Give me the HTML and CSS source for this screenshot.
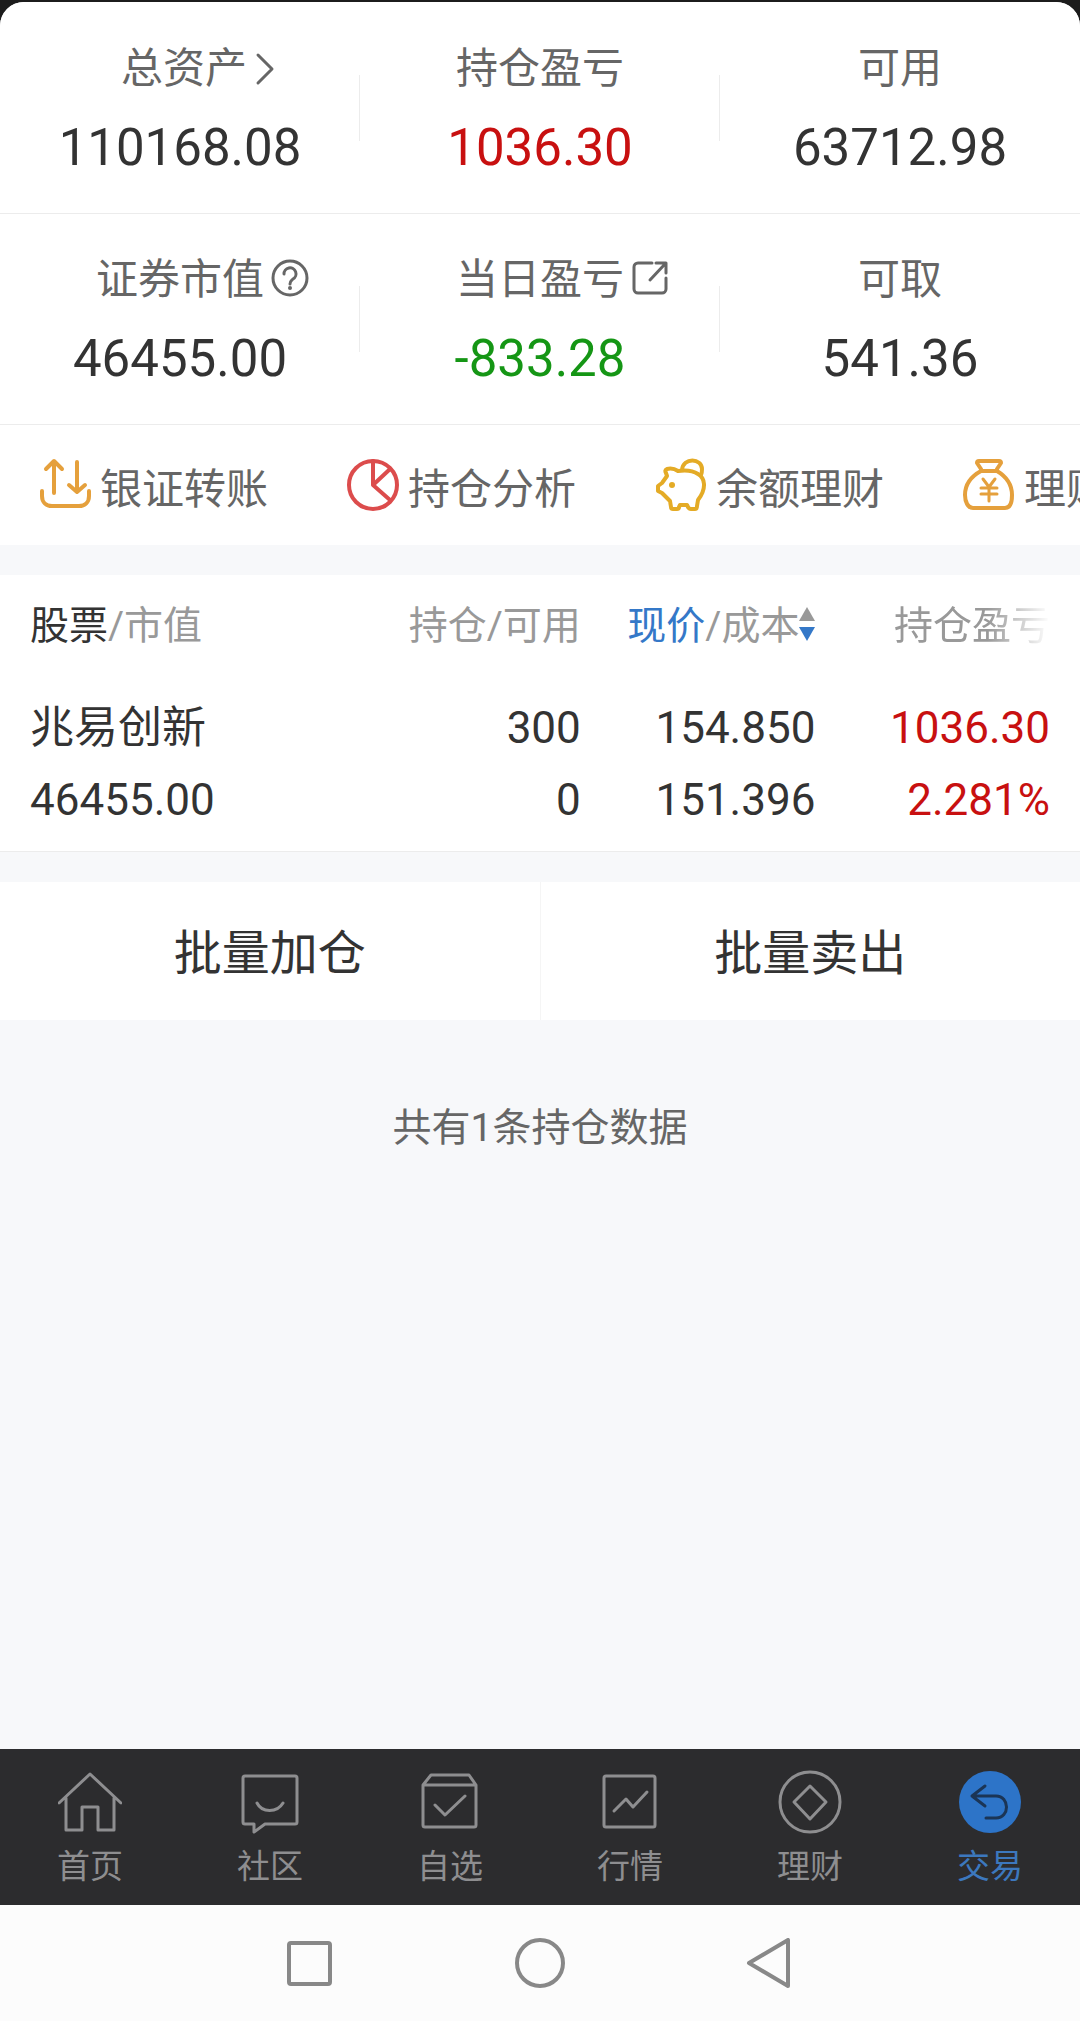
FILE: index.html
```html
<!DOCTYPE html>
<html lang="zh-CN">
<head>
  <meta charset="UTF-8">
  <meta name="viewport" content="width=device-width, initial-scale=1.0">
  <title>交易 - 持仓</title>
  <link rel="stylesheet" href="styles.css">
</head>
<body>
  <main class="page">
    <section class="summary">
      <div class="summary-row">
        <a href="#" class="cell">
          <span class="label">总资产
            <svg class="label-icon chevron" viewBox="0 0 30 38"><path d="M3 5l14 14L3 33"/></svg>
          </span>
          <span class="value">110168.08</span>
        </a>
        <div class="cell">
          <span class="label">持仓盈亏</span>
          <span class="value red">1036.30</span>
        </div>
        <div class="cell">
          <span class="label">可用</span>
          <span class="value">63712.98</span>
        </div>
      </div>
      <div class="summary-row">
        <div class="cell">
          <span class="label">证券市值
            <svg class="label-icon" viewBox="0 0 38 38">
              <circle cx="18" cy="17" r="17"/>
              <path d="M12 13a6 6 0 1 1 9 5c-2 2-3 2-3 5"/>
              <circle class="dot" cx="18" cy="27" r="2"/>
            </svg>
          </span>
          <span class="value">46455.00</span>
        </div>
        <a href="#" class="cell">
          <span class="label">当日盈亏
            <svg class="label-icon" viewBox="0 0 38 38"><path d="M20 2H6a4 4 0 0 0-4 4v22a4 4 0 0 0 4 4h24a4 4 0 0 0 4-4V17M24 2h10v10M33 3L18 19"/></svg>
          </span>
          <span class="value green">-833.28</span>
        </a>
        <div class="cell">
          <span class="label">可取</span>
          <span class="value">541.36</span>
        </div>
      </div>
    </section>

    <nav class="quick">
      <a href="#" class="quick-item">
        <svg class="quick-icon orange" viewBox="0 0 54 54"><path d="M16 35V4M8 11l8-8 8 8M39 4v30M31 27l8 7 8-7M4 33v5c0 6 4 10 10 10h27c6 0 10-4 10-10v-5"/></svg>
        <span>银证转账</span>
      </a>
      <a href="#" class="quick-item">
        <svg class="quick-icon coral" viewBox="0 0 54 54"><circle cx="27" cy="27" r="24"/><path d="M27 3v24l16-15M27 27l17 15"/></svg>
        <span>持仓分析</span>
      </a>
      <a href="#" class="quick-item">
        <svg class="quick-icon gold" viewBox="0 0 54 54">
          <path d="M24 13c-3-2-7-3-11-2-2 1-2 2-1 4l1 3-5 7-4 3v5l4 2 8 8 1 6q0 2 2 2h4q2 0 2-2l1-2h7l1 2q1 2 3 2h4q2 0 2-3l1-6c9-12 7-22 0-26-6-4-13-4-20-3z"/>
          <path d="M28 12c1-13 20-12 20-1 0 2 0 4-1 6"/>
          <circle class="dot" cx="18" cy="27" r="3"/>
        </svg>
        <span>余额理财</span>
      </a>
      <a href="#" class="quick-item">
        <svg class="quick-icon orange" viewBox="0 0 54 54">
          <path d="M17 3h20q2 0 2 2l-4 6v2H19v-2l-4-6q0-2 2-2zM19 13C8 19 3 28 3 37c0 7 3 13 8 13h32c5 0 7-6 7-13 0-9-5-18-15-24"/>
          <path class="thin" d="M21 21l6 8 6-8M27 29v14M19 30h16M19 36h16"/>
        </svg>
        <span>理财</span>
      </a>
    </nav>

    <section class="holdings">
      <table class="holdings-table">
        <thead>
          <tr>
            <th><span class="dark">股票</span>/市值</th>
            <th>持仓/可用</th>
            <th>
              <button class="sort"><span class="blue">现价</span>/成本<svg class="sort-icon" viewBox="0 0 16 38"><path class="up" d="M8 4l8 14H0z"/><path class="down" d="M0 24h16L8 38z"/></svg></button>
            </th>
            <th><span class="fade">持仓盈亏</span></th>
          </tr>
        </thead>
        <tbody>
          <tr>
            <td>兆易创新<br>46455.00</td>
            <td>300<br>0</td>
            <td>154.850<br>151.396</td>
            <td class="red">1036.30<br>2.281%</td>
          </tr>
        </tbody>
      </table>
    </section>

    <div class="batch">
      <button class="batch-btn">批量加仓</button>
      <button class="batch-btn">批量卖出</button>
    </div>

    <p class="count">共有1条持仓数据</p>
  </main>

  <nav class="tabbar">
    <a href="#" class="tab">
      <svg class="tab-icon" viewBox="0 0 64 64"><path d="M1 33L32 4l31 29M8 28v32h16V37h16v23h16V28"/></svg>
      <span>首页</span>
    </a>
    <a href="#" class="tab">
      <svg class="tab-icon" viewBox="0 0 64 64"><path d="M7 6h50q2 0 2 2v44q0 2-2 2H27l-11 8v-8H7q-2 0-2-2V8q0-2 2-2zM19 33c5 10 20 10 26 0"/></svg>
      <span>社区</span>
    </a>
    <a href="#" class="tab">
      <svg class="tab-icon" viewBox="0 0 64 64"><path d="M5 15l8-10h38l7 10v40q0 2-2 2H7q-2 0-2-2zM5 15h53M17 35l10 10 20-19"/></svg>
      <span>自选</span>
    </a>
    <a href="#" class="tab">
      <svg class="tab-icon" viewBox="0 0 64 64"><rect x="6" y="6" width="51" height="51" rx="2"/><path d="M16 41l12-12 7 8 14-15"/></svg>
      <span>行情</span>
    </a>
    <a href="#" class="tab">
      <svg class="tab-icon" viewBox="0 0 64 64"><circle cx="32" cy="32" r="30"/><path d="M32 16l16 16-16 17-16-17z"/></svg>
      <span>理财</span>
    </a>
    <a href="#" class="tab active">
      <svg class="tab-icon" viewBox="0 0 64 64"><circle class="disc" cx="32" cy="32" r="31"/><path d="M27 16L14 26l13 10M14 26h24c14 0 14 22 0 22H28"/></svg>
      <span>交易</span>
    </a>
  </nav>

  <div class="sysbar">
    <button class="sys-btn" aria-label="最近任务"><svg viewBox="0 0 50 50"><rect x="4" y="5" width="41" height="41" rx="2"/></svg></button>
    <button class="sys-btn" aria-label="主屏幕"><svg viewBox="0 0 50 50"><circle cx="25" cy="25" r="23"/></svg></button>
    <button class="sys-btn" aria-label="返回"><svg viewBox="0 0 50 50"><path d="M4 25L43 2v46z"/></svg></button>
  </div>
</body>
</html>
```
FILE: styles.css
```css
* {
  box-sizing: border-box;
}
body {
  font-family: Roboto, "Noto Sans CJK SC", sans-serif;
  background: #1c1c1c;
  color: #333;
  margin: 0;
  padding-top: 2px;
  min-height: 100vh;
  display: flex;
  flex-direction: column;
}
a {
  color: inherit;
  text-decoration: none;
}
button {
  font: inherit;
  color: inherit;
  background: none;
  border: none;
  padding: 0;
  cursor: pointer;
}
svg {
  fill: none;
  stroke: currentColor;
  stroke-linecap: round;
  stroke-linejoin: round;
}
.dot {
  fill: currentColor;
  stroke: none;
}
.red {
  color: #c81010;
}
.green {
  color: #159615;
}
.blue {
  color: #3478c8;
}
.dark {
  color: #333;
}
.page {
  flex: 1;
  background: #f7f8fa;
  border-radius: 24px 24px 0 0;
  overflow: hidden;
}

/* 资产汇总 */
.summary {
  padding-top: 1px;
  background: #fff;
}
.summary-row {
  display: flex;
  border-bottom: 1px solid #ececec;
}
.cell {
  flex: 1;
  display: flex;
  flex-direction: column;
  align-items: center;
  gap: 17px;
  padding: 36px 0 33px;
  background: linear-gradient(#ececec, #ececec) right 72px / 1px 66px no-repeat;
}
.cell:last-child {
  background: none;
}
.label {
  display: flex;
  align-items: center;
  gap: 8px;
  font-size: 42px;
  line-height: 60px;
  color: #666;
}
.label-icon {
  width: 38px;
  height: 38px;
  margin-right: -46px;
  overflow: visible;
  stroke-width: 3;
}
.label-icon.chevron {
  width: 30px;
}
.value {
  font-size: 51px;
  line-height: 64px;
}

/* 快捷入口 */
.quick {
  display: flex;
  overflow: hidden;
  background: #fff;
  color: #666;
}
.quick-item {
  flex: 0 0 308px;
  display: flex;
  align-items: center;
  gap: 8px;
  height: 120px;
  padding-left: 38px;
  font-size: 42px;
  white-space: nowrap;
}
.quick-icon {
  width: 54px;
  height: 54px;
  stroke-width: 4;
}
.quick-icon .thin {
  stroke-width: 3;
}
.orange {
  color: #e5a03c;
}
.coral {
  color: #dc4c4c;
}
.gold {
  color: #e4ab26;
}

/* 持仓列表 */
.holdings {
  margin-top: 30px;
  padding: 0 30px;
  background: #fff;
  border-bottom: 1px solid #ececec;
}
.holdings-table {
  width: 100%;
  table-layout: fixed;
  border-collapse: collapse;
}
.holdings-table th {
  width: 23%;
  height: 98px;
  padding: 0 0 4px;
  font-size: 39px;
  font-weight: normal;
  text-align: right;
  color: #999;
}
.holdings-table td {
  padding: 19px 0 15px;
  font-size: 44px;
  line-height: 72px;
  text-align: right;
}
.holdings-table th:first-child,
.holdings-table td:first-child {
  width: auto;
  text-align: left;
}
.sort {
  display: inline-flex;
  align-items: center;
}
.sort-icon {
  width: 16px;
  height: 38px;
  stroke: none;
}
.sort-icon .up {
  fill: #999;
}
.sort-icon .down {
  fill: #3478c8;
}
.fade {
  -webkit-mask-image: linear-gradient(to right, #000 60%, transparent);
  mask-image: linear-gradient(to right, #000 60%, transparent);
}

/* 批量操作 */
.batch {
  display: flex;
  margin-top: 30px;
  background: #fff;
}
.batch-btn {
  flex: 1;
  height: 138px;
  padding-bottom: 4px;
  font-size: 48px;
}
.batch-btn + .batch-btn {
  border-left: 1px solid #f5f5f5;
}
.count {
  margin: 0;
  padding-top: 78px;
  font-size: 39px;
  line-height: 60px;
  text-align: center;
  color: #666;
}

/* 底部导航 */
.tabbar {
  display: flex;
  background: #2c2c2e;
  color: #8e8e90;
}
.tab {
  flex: 1;
  display: flex;
  flex-direction: column;
  align-items: center;
  gap: 11px;
  padding: 21px 0 16px;
  font-size: 33px;
  line-height: 44px;
}
.tab-icon {
  width: 64px;
  height: 64px;
  stroke-width: 3;
}
.tab.active {
  color: #3c78be;
}
.tab.active .tab-icon {
  stroke: #1b3556;
}
.tab-icon .disc {
  fill: #2d74c8;
  stroke: none;
}
.sysbar {
  display: flex;
  justify-content: center;
  align-items: center;
  gap: 180px;
  height: 116px;
  background: #fcfcfc;
  color: #888;
}
.sys-btn {
  width: 50px;
  height: 50px;
}
.sys-btn svg {
  display: block;
  width: 50px;
  height: 50px;
  stroke-width: 4;
}
```
